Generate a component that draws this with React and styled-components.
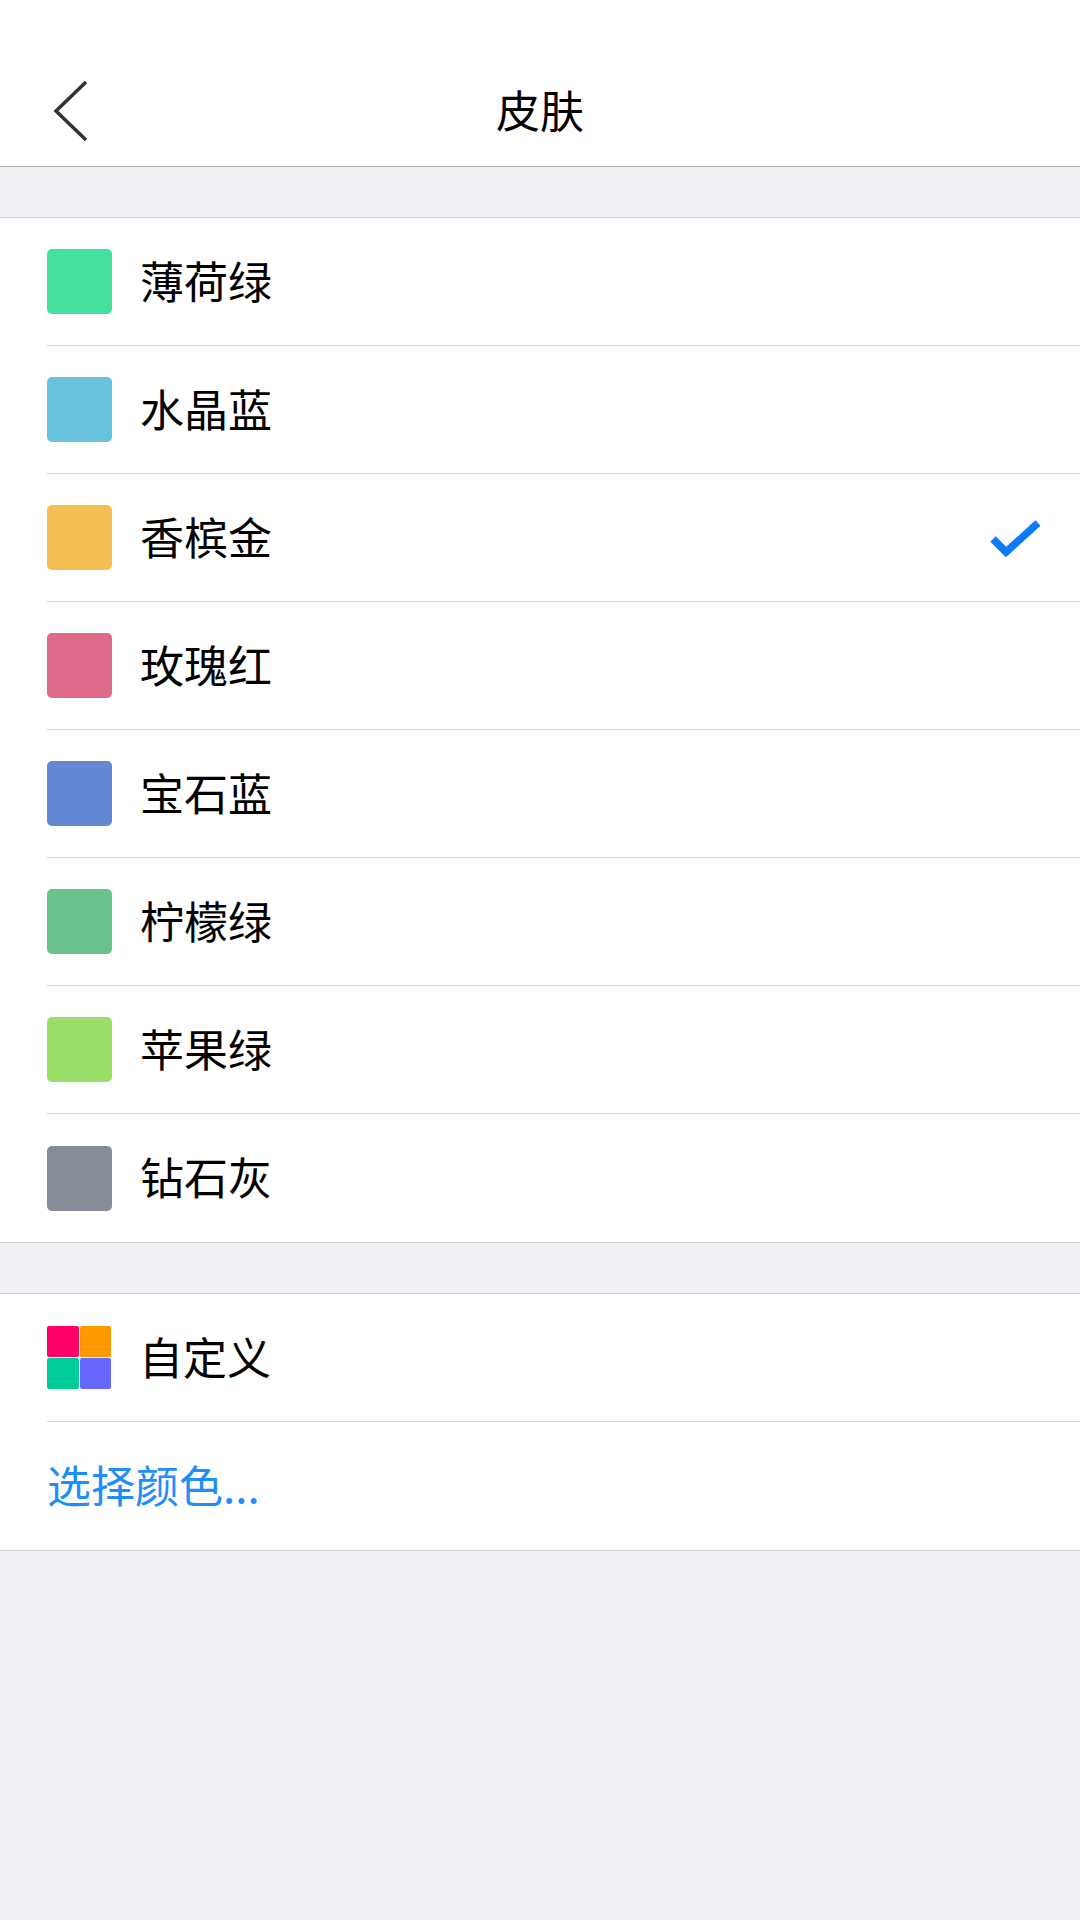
import React from 'react';
import styled, { createGlobalStyle } from 'styled-components';

const GlobalStyle = createGlobalStyle`
  html, body {
    margin: 0;
    padding: 0;
    background: #efeff4;
    font-family: "Noto Sans CJK SC", "Noto Sans", sans-serif;
  }
  * { box-sizing: border-box; }
`;

const Page = styled.div`
  width: 1080px;
  min-height: 1920px;
  background: #efeff4;
`;

const Header = styled.header`
  height: 167px;
  padding-top: 55px;
  background: #fff;
  border-bottom: 1px solid #b4b4b4;
`;

const NavBar = styled.div`
  height: 111px;
  display: grid;
  grid-template-columns: 140px 1fr 140px;
  align-items: center;
`;

const BackButton = styled.button`
  border: 0;
  background: none;
  padding: 0 0 0 52px;
  height: 100%;
  display: flex;
  align-items: center;
  cursor: pointer;
`;

const Title = styled.h1`
  margin: 0;
  padding-bottom: 4px;
  text-align: center;
  font-size: 44px;
  font-weight: 400;
  color: #000;
  line-height: 1;
`;

const Spacer = styled.div`
  height: ${p => p.$h}px;
`;

const Group = styled.ul`
  list-style: none;
  margin: 0;
  padding: 0;
  background: #fff;
  border-top: 1px solid #cfced3;
  border-bottom: 1px solid #cfced3;
`;

const Row = styled.li`
  padding-left: 47px;
  &:last-child > div {
    border-bottom: 0;
  }
`;

const RowInner = styled.div`
  height: 128px;
  display: flex;
  align-items: center;
  border-bottom: 1px solid #d6d6da;
  padding-right: 38px;
`;

const Swatch = styled.span`
  width: 65px;
  height: 65px;
  border-radius: 5px;
  background: ${p => p.$color};
  flex-shrink: 0;
`;

const Quad = styled.span`
  width: 64px;
  height: 63px;
  display: grid;
  grid-template-columns: 1fr 1fr;
  grid-template-rows: 1fr 1fr;
  gap: 1px;
  flex-shrink: 0;
`;

const QuadCell = styled.span`
  background: ${p => p.$color};
  border-radius: 2px;
`;

const Label = styled.span`
  margin-left: 28px;
  padding-bottom: 4px;
  font-size: 44px;
  color: #000;
  flex: 1;
  line-height: 1;
`;

const LinkLabel = styled.span`
  padding-bottom: 4px;
  font-size: 44px;
  color: #1e8efa;
  line-height: 1;
`;

const skins = [
  { name: '薄荷绿', color: '#45e0a0' },
  { name: '水晶蓝', color: '#67c2dd' },
  { name: '香槟金', color: '#f4be53', checked: true },
  { name: '玫瑰红', color: '#e06a8b' },
  { name: '宝石蓝', color: '#6386d5' },
  { name: '柠檬绿', color: '#69c28b' },
  { name: '苹果绿', color: '#98de67' },
  { name: '钻石灰', color: '#868c98' },
];

const Check = () => (
  <svg width="54" height="42" viewBox="0 0 54 42">
    <polyline
      points="5,22 18,35 50,6"
      fill="none"
      stroke="#0a7aff"
      strokeWidth="7.5"
    />
  </svg>
);

const Chevron = () => (
  <svg width="36" height="62" viewBox="0 0 36 62">
    <polyline
      points="34,2 4,31 34,60"
      fill="none"
      stroke="#333"
      strokeWidth="3.5"
    />
  </svg>
);

export default function App() {
  return (
    <Page>
      <GlobalStyle />
      <Header>
        <NavBar>
          <BackButton aria-label="返回">
            <Chevron />
          </BackButton>
          <Title>皮肤</Title>
          <div />
        </NavBar>
      </Header>
      <Spacer $h={50} />
      <Group>
        {skins.map(s => (
          <Row key={s.name}>
            <RowInner>
              <Swatch $color={s.color} />
              <Label>{s.name}</Label>
              {s.checked && <Check />}
            </RowInner>
          </Row>
        ))}
      </Group>
      <Spacer $h={50} />
      <Group>
        <Row>
          <RowInner>
            <Quad>
              <QuadCell $color="#ff0066" />
              <QuadCell $color="#ff9900" />
              <QuadCell $color="#00cc99" />
              <QuadCell $color="#6666ff" />
            </Quad>
            <Label>自定义</Label>
          </RowInner>
        </Row>
        <Row>
          <RowInner>
            <LinkLabel>选择颜色...</LinkLabel>
          </RowInner>
        </Row>
      </Group>
    </Page>
  );
}
